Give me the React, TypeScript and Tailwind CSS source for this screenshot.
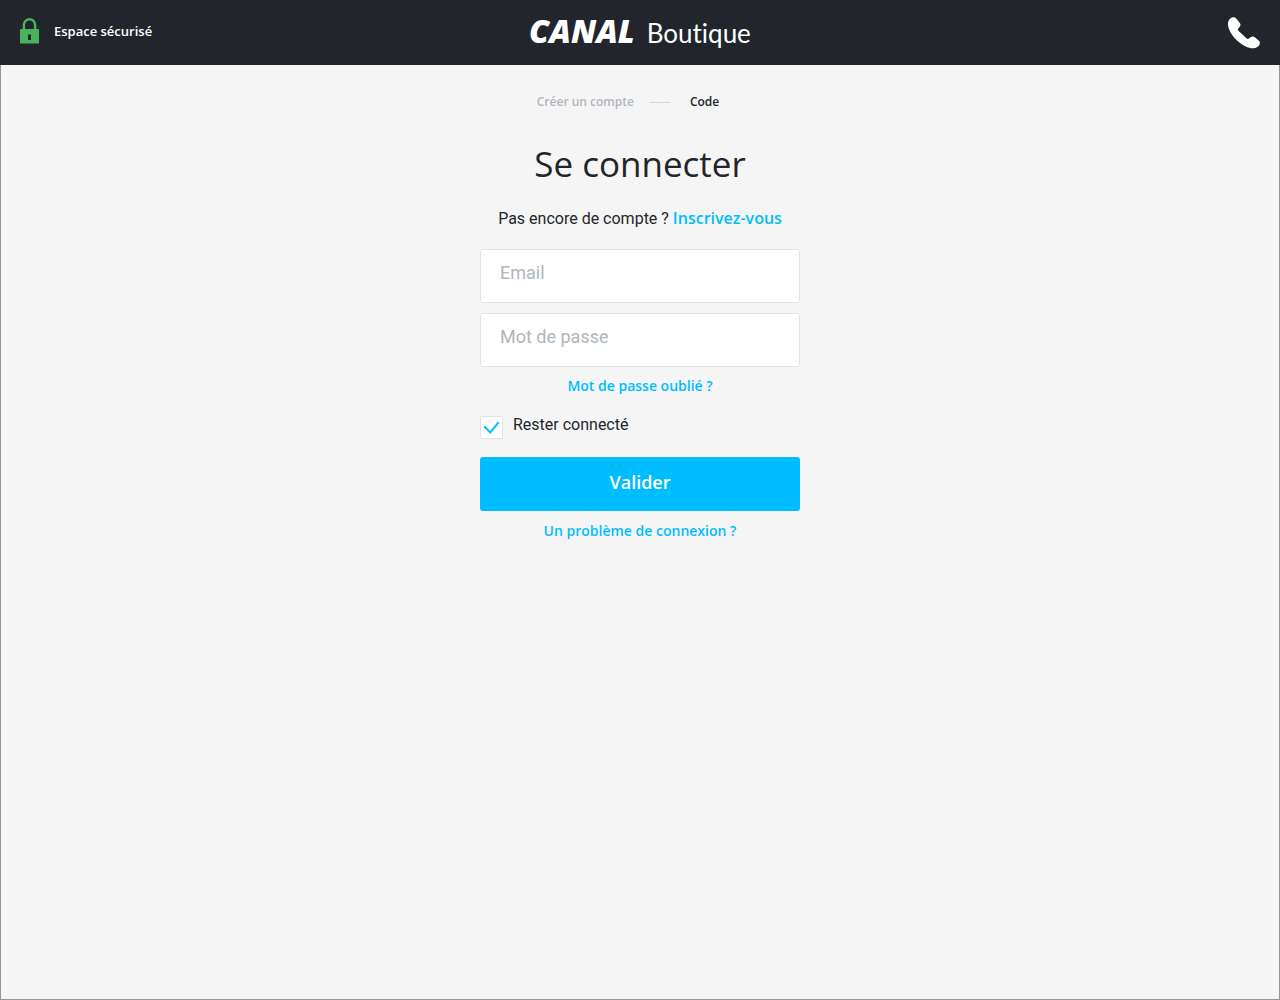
import { useState } from "react"

const fieldClass = `block h-[54px] w-full rounded-[3px] border border-[#e1e3e9] bg-white px-[19px]
  pb-2 font-['Roboto',sans-serif] text-lg text-[#22262b] placeholder:text-[#b0b6be]
  focus:border-[#00bdff] focus:outline-none`

function Header() {
  return (
    <header className="grid h-[65px] grid-cols-3 items-center bg-[#22262c] px-5 text-white">
      <div className="flex items-center gap-x-[15px] pb-1">
        <svg width="19" height="26" viewBox="0 0 19 26" className="shrink-0" aria-hidden="true">
          <path d="M3.9 12V7a5.6 5.8 0 0 1 11.2 0v5" fill="none" stroke="#48b25c" strokeWidth="2.4" />
          <rect y="11" width="19" height="14.5" rx="0.6" fill="#48b25c" />
          <path d="M8 16.5h3v2l-.5.5.5.5v2.500H8v-2.500l.5-.5-.5-.5z" fill="#22262c" />
        </svg>
        <span className="text-[13px] font-semibold leading-4">Espace sécurisé</span>
      </div>
      <a
        href="#"
        className="flex items-baseline justify-center gap-x-3 whitespace-nowrap pb-px leading-9"
      >
        <span className="text-[32px] font-extrabold italic">CANAL</span>
        <span className="font-['Lato',sans-serif] text-[26px] [font-variant-ligatures:none]">
          Boutique
        </span>
      </a>
      <button type="button" aria-label="Nous appeler" className="justify-self-end">
        <svg width="32" height="32" viewBox="0 0 32 32" fill="currentColor" aria-hidden="true">
          <path
            d="M5 .2C2 .8 0 3.400 0 7c0 5 3.600 11.300 9 16.500C14.500 28.600 20.500 31.300 25 31.300
              c3.300 0 6-1.700 6.800-4.500.4-1.300-.1-2.300-1.300-3.200L27.200 20.500c-1.500-1.300-3.200-1.300-4.600-.2
              l-1.700 1.300c-.7.500-1.500.4-2.200-.1l-8.300-7.800c-.7-.8-.8-1.600-.2-2.300l1.400-1.500
              c1.200-1.300 1.200-2.700 0-4.200L8.200 1.500C7.300.4 6.200 0 5 .2z"
          />
        </svg>
      </button>
    </header>
  )
}

export default function App() {
  const [stayConnected, setStayConnected] = useState(true)

  return (
    <div className="flex min-h-screen flex-col bg-[#f5f5f5] font-['Open_Sans',sans-serif] text-[#22262b]">
      <Header />
      <main className="flex grow flex-col items-center border-x border-b border-[#969696]">
        <ol className="mt-7 mr-6 flex items-center text-xs font-semibold leading-[18px]">
          <li className="text-[#b0b6be]">Créer un compte</li>
          <li aria-hidden="true" className="ml-4 mr-5 h-px w-5 bg-[#d3d6da]" />
          <li>Code</li>
        </ol>
        <h1 className="mt-7 text-[35px] leading-[50px]">Se connecter</h1>
        <form className="mt-[17px] w-80" onSubmit={(event) => event.preventDefault()}>
          <p className="text-center font-['Roboto',sans-serif] text-base leading-6">
            Pas encore de compte ?{" "}
            <a href="#" className="font-['Open_Sans',sans-serif] font-semibold text-[#00bdff]">
              Inscrivez-vous
            </a>
          </p>
          <div className="mt-[18px] grid gap-y-2.5">
            <input type="email" aria-label="Email" placeholder="Email" className={fieldClass} />
            <input
              type="password"
              aria-label="Mot de passe"
              placeholder="Mot de passe"
              className={fieldClass}
            />
          </div>
          <div className="mt-2.5 text-center text-sm font-semibold leading-[18px]">
            <a href="#" className="text-[#00bdff]">Mot de passe oublié ?</a>
          </div>
          <div className="mt-[21px] flex">
            <span className="grid">
              <input
                id="stay-connected"
                type="checkbox"
                checked={stayConnected}
                onChange={(event) => setStayConnected(event.target.checked)}
                className="peer col-start-1 row-start-1 size-[23px] appearance-none rounded-xs border
                  border-[#e1e3e9] bg-white"
              />
              <svg
                viewBox="0 0 23 23"
                className="pointer-events-none invisible col-start-1 row-start-1 size-[23px]
                  fill-none stroke-[#00bdff] stroke-2 peer-checked:visible"
                aria-hidden="true"
              >
                <path d="M4.300 10.300 10.300 16.600 18.700 6.200" />
              </svg>
            </span>
            <label
              htmlFor="stay-connected"
              className="ml-2.5 font-['Roboto',sans-serif] text-base leading-[18px]"
            >
              Rester connecté
            </label>
          </div>
          <button
            type="submit"
            className="mt-[18px] h-[54px] w-full rounded-[3px] bg-[#00bdff] pb-1 text-lg font-semibold
              text-white"
          >
            Valider
          </button>
          <div className="mt-[11px] text-center text-sm font-semibold leading-[18px]">
            <a href="#" className="text-[#00bdff]">Un problème de connexion ?</a>
          </div>
        </form>
      </main>
    </div>
  )
}
